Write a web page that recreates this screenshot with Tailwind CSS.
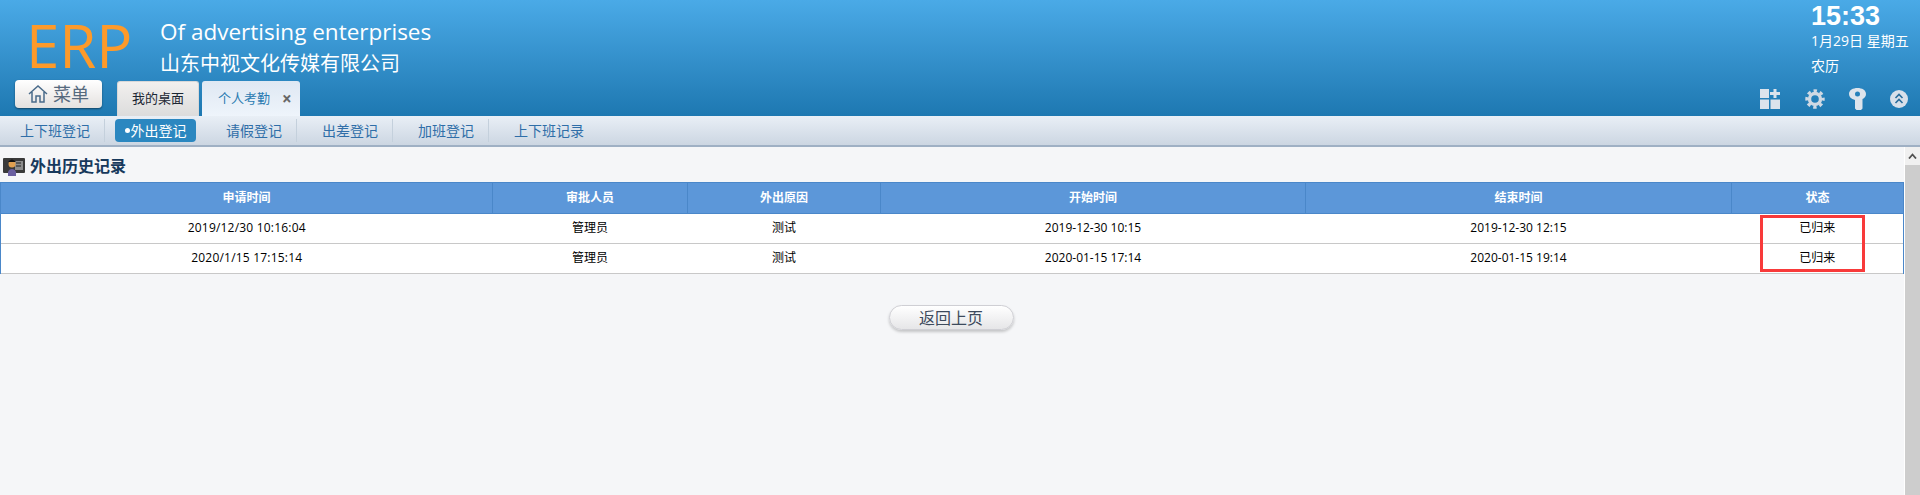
<!DOCTYPE html>
<html lang="zh-CN">
<head>
    <meta charset="UTF-8">
    <title>ERP</title>
    <script src="https://cdn.jsdelivr.net/npm/@tailwindcss/browser@4"></script>
</head>
<body class="h-screen overflow-hidden flex flex-col bg-[#f5f6f8] [font-family:'Open_Sans','Noto_Sans_CJK_SC',sans-serif]">
    <!-- header -->
    <header class="h-[116px] shrink-0 flex justify-between bg-gradient-to-b from-[#4aaae7] to-[#1d78b1]">
        <div class="flex flex-col">
            <div class="h-[81px] flex">
                <div class="pl-[26px] pt-[12px] w-[160px] text-[60px] leading-[66px] text-[#fd9a2a]">ERP</div>
                <div class="pt-[17px] text-white">
                    <div class="text-[22.5px] leading-[30px]">Of advertising enterprises</div>
                    <div class="text-[20px] leading-[30px] mt-[2px]">山东中视文化传媒有限公司</div>
                </div>
            </div>
            <div class="flex items-start pl-[15px]">
                <button class="w-[87px] h-[28px] -mt-[1px] flex items-center justify-center gap-[5px] rounded-[4px] bg-gradient-to-b from-white to-[#e4e1df] shadow-[0_1px_2px_rgba(0,0,0,0.45)] text-[18px] text-[#566a7e]">
                    <svg width="20" height="20" viewBox="0 0 20 20" fill="none" stroke="#4a6b8a" stroke-width="1.5"><path d="M1 10 10 2l9 8M4 8v10h4v-6h4v6h4V8"/></svg>
                    菜单
                </button>
                <div class="ml-[15px] w-[82px] h-[35px] flex items-center justify-center rounded-t-[3px] bg-gradient-to-b from-[#f2f0ee] to-[#dcdcdc] border-t border-x border-[#d8d8d8] text-[13px] text-[#1c2733]">我的桌面</div>
                <div class="ml-[3px] w-[98px] h-[35px] flex items-center pl-[16px] gap-[12px] rounded-t-[3px] bg-gradient-to-b from-[#dfe8f3] to-[#eef4fb] text-[13px] text-[#2c7cb2]">
                    个人考勤
                    <span class="text-[17px] font-bold leading-none text-[#666]">×</span>
                </div>
            </div>
        </div>
        <div class="w-[148px] flex flex-col">
            <div class="pl-[39px] text-white">
                <div class="pt-[1px] text-[27px] leading-[30px] font-bold [font-family:'Liberation_Sans',sans-serif]">15:33</div>
                <div class="mt-[1px] text-[14px] leading-[18px] whitespace-nowrap">1月29日 星期五</div>
                <div class="mt-[7px] text-[14px] leading-[18px]">农历</div>
            </div>
            <div class="mt-[13px] flex items-center">
                <!-- grid -->
                <svg class="ml-[-12px]" width="20" height="20" viewBox="0 0 20 20" fill="#dbe3ec"><path d="M0 0h9v9H0zM0 10.500h9V20H0zM10.500 10.500H20V20h-9.500zM13.500 0h3v3H20v3h-3.500v3h-3V6H10V3h3.500z"/></svg>
                <!-- gear -->
                <svg class="ml-[25px]" width="20" height="20" viewBox="0 0 20 20" fill="none" stroke="#cfd9e4">
                    <circle cx="10" cy="10" r="5.500" stroke-width="3.400"/>
                    <circle cx="10" cy="10" r="8.200" stroke-width="3" stroke-dasharray="3.400 3.040" stroke-dashoffset="1.700"/>
                </svg>
                <!-- key -->
                <svg class="ml-[24px]" width="17" height="22" viewBox="0 0 17 22" fill="#dde4ec"><path fill-rule="evenodd" d="M8.500 0C13 0 17 2 17 6c0 2.500-1.500 4-3.500 5v9.500L12 22H7.500L6 20.500V12C2 11 0 9 0 6c0-4 4-6 8.500-6zm0 3.500a2.500 2.500 0 1 0 0 5 2.500 2.500 0 0 0 0-5z"/></svg>
                <!-- collapse -->
                <svg class="ml-[24px]" width="18" height="18" viewBox="0 0 18 18"><circle cx="9" cy="9" r="9" fill="#d8e0ea"/><path d="M5.500 8 9 4.500 12.500 8M5.500 13 9 9.500l3.500 3.500" fill="none" stroke="#2a6d9c" stroke-width="1.600"/></svg>
            </div>
        </div>
    </header>

    <!-- sub nav -->
    <nav class="h-[31px] shrink-0 flex items-start pt-[3px] bg-gradient-to-b from-[#e9eff6] to-[#ccd6e2] border-b-2 border-[#9fb0c4] text-[14px] leading-[23px] text-[#2f6ea8]">
        <a class="w-[105px] h-[23px] pl-[20px] border-r border-[#c4d0dc]">上下班登记</a>
        <a class="ml-[10px] w-[81px] h-[23px] flex items-center justify-center rounded-[4px] bg-[#2b87c0] text-white"><span class="w-[5px] h-[5px] mr-[1px] rounded-full bg-white"></span>外出登记</a>
        <a class="ml-[4px] w-[97px] h-[23px] pl-[26px] border-r border-[#c4d0dc]">请假登记</a>
        <a class="w-[96px] h-[23px] pl-[25px] border-r border-[#c4d0dc]">出差登记</a>
        <a class="w-[96px] h-[23px] pl-[25px] border-r border-[#c4d0dc]">加班登记</a>
        <a class="pl-[25px]">上下班记录</a>
    </nav>

    <!-- content -->
    <div class="flex-1 flex min-h-0">
        <main class="flex-1 min-w-0">
            <div class="h-[35px] flex items-center pl-[3px] pt-[3px] gap-[5px] text-[16px] font-bold text-[#17395c]">
                <svg width="22" height="19" viewBox="0 0 22 19">
                    <rect x="0" y="1" width="22" height="15" rx="1" fill="#3a3a3a"/>
                    <rect x="12" y="4" width="8" height="9" fill="#8d8d8d"/>
                    <path d="M13 6h5M13 9h5" stroke="#222" stroke-width="1.200"/>
                    <circle cx="9" cy="7" r="3.500" fill="#e0a050"/>
                    <path d="M5 5q4-5 8 0l-3 0z" fill="#111"/>
                    <path d="M5 19v-4q1-3 4-3t4 3v4z" fill="#6a5fa0"/>
                </svg>
                外出历史记录
            </div>
            <div class="relative">
                <table class="w-full table-fixed border-collapse text-center text-[12px]">
                    <colgroup>
                        <col class="w-[492px]"><col class="w-[195px]"><col class="w-[193px]"><col class="w-[425px]"><col class="w-[426px]"><col>
                    </colgroup>
                    <thead>
                        <tr class="h-[31px] bg-[#5c97d9] text-white font-bold">
                            <th class="border border-[#4a87c9]">申请时间</th>
                            <th class="border border-[#4a87c9]">审批人员</th>
                            <th class="border border-[#4a87c9]">外出原因</th>
                            <th class="border border-[#4a87c9]">开始时间</th>
                            <th class="border border-[#4a87c9]">结束时间</th>
                            <th class="border border-[#4a87c9]">状态</th>
                        </tr>
                    </thead>
                    <tbody class="bg-white text-black">
                        <tr class="h-[30px] border-b border-[#c8c8c8]">
                            <td class="pb-[2px] tracking-[0.2px] border-l border-[#4a87c9]">2019/12/30 10:16:04</td>
                            <td class="pb-[2px]">管理员</td>
                            <td class="pb-[2px]">测试</td>
                            <td class="pb-[2px]">2019-12-30 10:15</td>
                            <td class="pb-[2px]">2019-12-30 12:15</td>
                            <td class="pb-[2px] border-r border-[#4a87c9]">已归来</td>
                        </tr>
                        <tr class="h-[30px] border-b border-[#c8c8c8]">
                            <td class="pb-[2px] tracking-[0.2px] border-l border-[#4a87c9]">2020/1/15 17:15:14</td>
                            <td class="pb-[2px]">管理员</td>
                            <td class="pb-[2px]">测试</td>
                            <td class="pb-[2px]">2020-01-15 17:14</td>
                            <td class="pb-[2px]">2020-01-15 19:14</td>
                            <td class="pb-[2px] border-r border-[#4a87c9]">已归来</td>
                        </tr>
                    </tbody>
                </table>
                <!-- red annotation over the status column -->
                <div class="absolute left-[1760px] top-[33px] w-[105px] h-[57px] border-[3px] border-[#f83a3a]"></div>
            </div>
            <div class="mt-[31px] flex justify-center pr-[2px]">
                <button class="w-[125px] h-[25px] rounded-full border border-[#cfcfd4] bg-gradient-to-b from-white to-[#e6e6e8] shadow-[0_2px_3px_rgba(0,0,0,0.2)] text-[16px] leading-[22px] text-[#3d4a5c]">返回上页</button>
            </div>
        </main>
        <!-- scrollbar -->
        <div class="w-[16px] shrink-0 flex flex-col border-l border-white bg-[#f0f0f0]">
            <div class="h-[18px] flex items-center justify-center">
                <svg width="9" height="6" viewBox="0 0 9 6" fill="none" stroke="#505050" stroke-width="1.800"><path d="M1 5.500 4.500 1.500 8 5.500"/></svg>
            </div>
            <div class="flex-1 bg-[#cdcdcd]"></div>
        </div>
    </div>
</body>
</html>
